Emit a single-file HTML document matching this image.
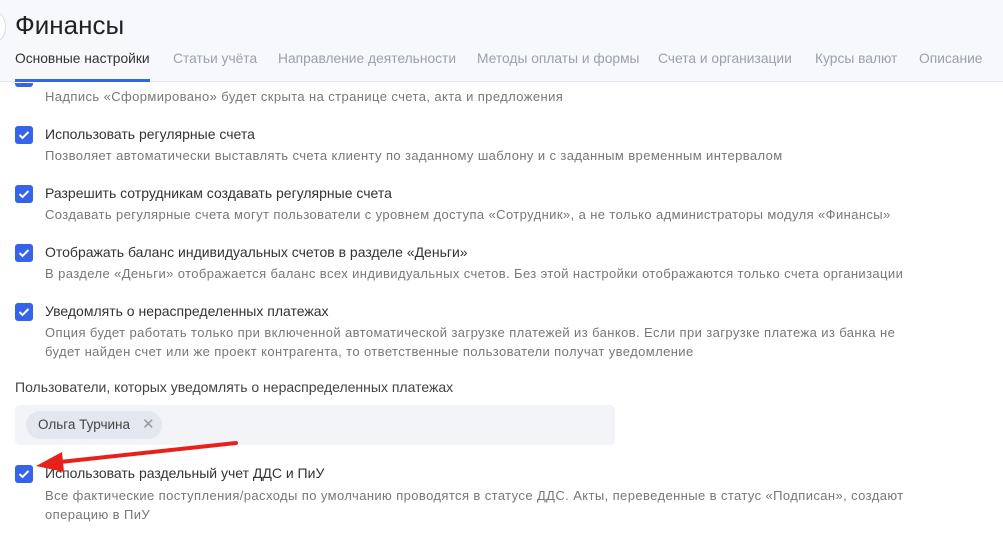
<!DOCTYPE html>
<html><head><meta charset="utf-8"><style>
*{margin:0;padding:0;box-sizing:border-box}
body{width:1003px;height:537px;overflow:hidden;background:#fff;font-family:"Liberation Sans","Noto Sans CJK SC",sans-serif;position:relative}
.hdr{position:absolute;left:0;top:0;width:1003px;height:82px;background:#f7f8fc;border-bottom:1px solid #e3e6ef}
.t{position:absolute;white-space:nowrap}
.title{left:15px;top:10px;font-size:26px;color:#222}
.tab{top:51px;font-size:13.8px;color:#9aa0ad}
.tab.a{color:#333}
.ul{position:absolute;left:15px;top:79px;width:135px;height:3px;background:#3366e6}
.circ{position:absolute;left:-14px;top:12px;width:20px;height:30px;border:1px solid #ddd;border-radius:50%;background:#fff}
.lab{font-size:14px;color:#333}
.desc{font-size:13px;color:#777;line-height:19px;letter-spacing:0.4px}
.cb{position:absolute;left:15px;width:18px;height:18px;background:#3563e9;border-radius:3px}
.cb svg{position:absolute;left:3px;top:4px}
.box{position:absolute;left:15px;top:405px;width:600px;height:40px;background:#f3f4f8;border-radius:5px}
.chip{position:absolute;left:26px;top:411px;width:136px;height:28px;background:#e4e7ef;border-radius:14px;font-size:13.5px;color:#444;padding:6px 0 0 12px}
.chip span{position:absolute;left:116px;top:4px;color:#999;font-size:15px}
</style></head><body>
<div class="hdr">
<div class="circ"></div>
<div class="t title">Финансы</div>
<div class="t tab a" style="left:15px">Основные настройки</div>
<div class="t tab" style="left:173px">Статьи учёта</div>
<div class="t tab" style="left:278px">Направление деятельности</div>
<div class="t tab" style="left:477px">Методы оплаты и формы</div>
<div class="t tab" style="left:658px">Счета и организации</div>
<div class="t tab" style="left:815px">Курсы валют</div>
<div class="t tab" style="left:919px">Описание</div>
<div class="ul"></div>
</div>
<div class="cb" style="left:15px;width:18px;top:83px;height:4px;border-radius:0 0 3px 3px"></div>
<div class="t desc" style="left:45px;top:87px">Надпись «Сформировано» будет скрыта на странице счета, акта и предложения</div>

<div class="cb" style="top:126px"><svg width="12" height="10"><path d="M1.5 5 L4.5 8 L10.5 2" stroke="#fff" stroke-width="2" fill="none"/></svg></div>
<div class="t lab" style="left:45px;top:126px">Использовать регулярные счета</div>
<div class="t desc" style="left:45px;top:146px">Позволяет автоматически выставлять счета клиенту по заданному шаблону и с заданным временным интервалом</div>

<div class="cb" style="top:185px"><svg width="12" height="10"><path d="M1.5 5 L4.5 8 L10.5 2" stroke="#fff" stroke-width="2" fill="none"/></svg></div>
<div class="t lab" style="left:45px;top:185px">Разрешить сотрудникам создавать регулярные счета</div>
<div class="t desc" style="left:45px;top:205px">Создавать регулярные счета могут пользователи с уровнем доступа «Сотрудник», а не только администраторы модуля «Финансы»</div>

<div class="cb" style="top:244px"><svg width="12" height="10"><path d="M1.5 5 L4.5 8 L10.5 2" stroke="#fff" stroke-width="2" fill="none"/></svg></div>
<div class="t lab" style="left:45px;top:244px">Отображать баланс индивидуальных счетов в разделе «Деньги»</div>
<div class="t desc" style="left:45px;top:264px">В разделе «Деньги» отображается баланс всех индивидуальных счетов. Без этой настройки отображаются только счета организации</div>

<div class="cb" style="top:303px"><svg width="12" height="10"><path d="M1.5 5 L4.5 8 L10.5 2" stroke="#fff" stroke-width="2" fill="none"/></svg></div>
<div class="t lab" style="left:45px;top:303px">Уведомлять о нераспределенных платежах</div>
<div class="t desc" style="left:45px;top:323px">Опция будет работать только при включенной автоматической загрузке платежей из банков. Если при загрузке платежа из банка не<br>будет найден счет или же проект контрагента, то ответственные пользователи получат уведомление</div>

<div class="t lab" style="left:15px;top:379px;color:#444">Пользователи, которых уведомлять о нераспределенных платежах</div>
<div class="box"></div>
<div class="chip">Ольга Турчина<span>✕</span></div>

<div class="cb" style="top:465px"><svg width="12" height="10"><path d="M1.5 5 L4.5 8 L10.5 2" stroke="#fff" stroke-width="2" fill="none"/></svg></div>
<div class="t lab" style="left:45px;top:465px">Использовать раздельный учет ДДС и ПиУ</div>
<div class="t desc" style="left:45px;top:486px">Все фактические поступления/расходы по умолчанию проводятся в статусе ДДС. Акты, переведенные в статус «Подписан», создают<br>операцию в ПиУ</div>

<svg style="position:absolute;left:0;top:0" width="1003" height="537">
<line x1="236" y1="443" x2="60" y2="462" stroke="#e8201c" stroke-width="4" stroke-linecap="round"/>
<polygon points="36,466 62,452 64,472" fill="#e8201c"/>
</svg>
</body></html>
